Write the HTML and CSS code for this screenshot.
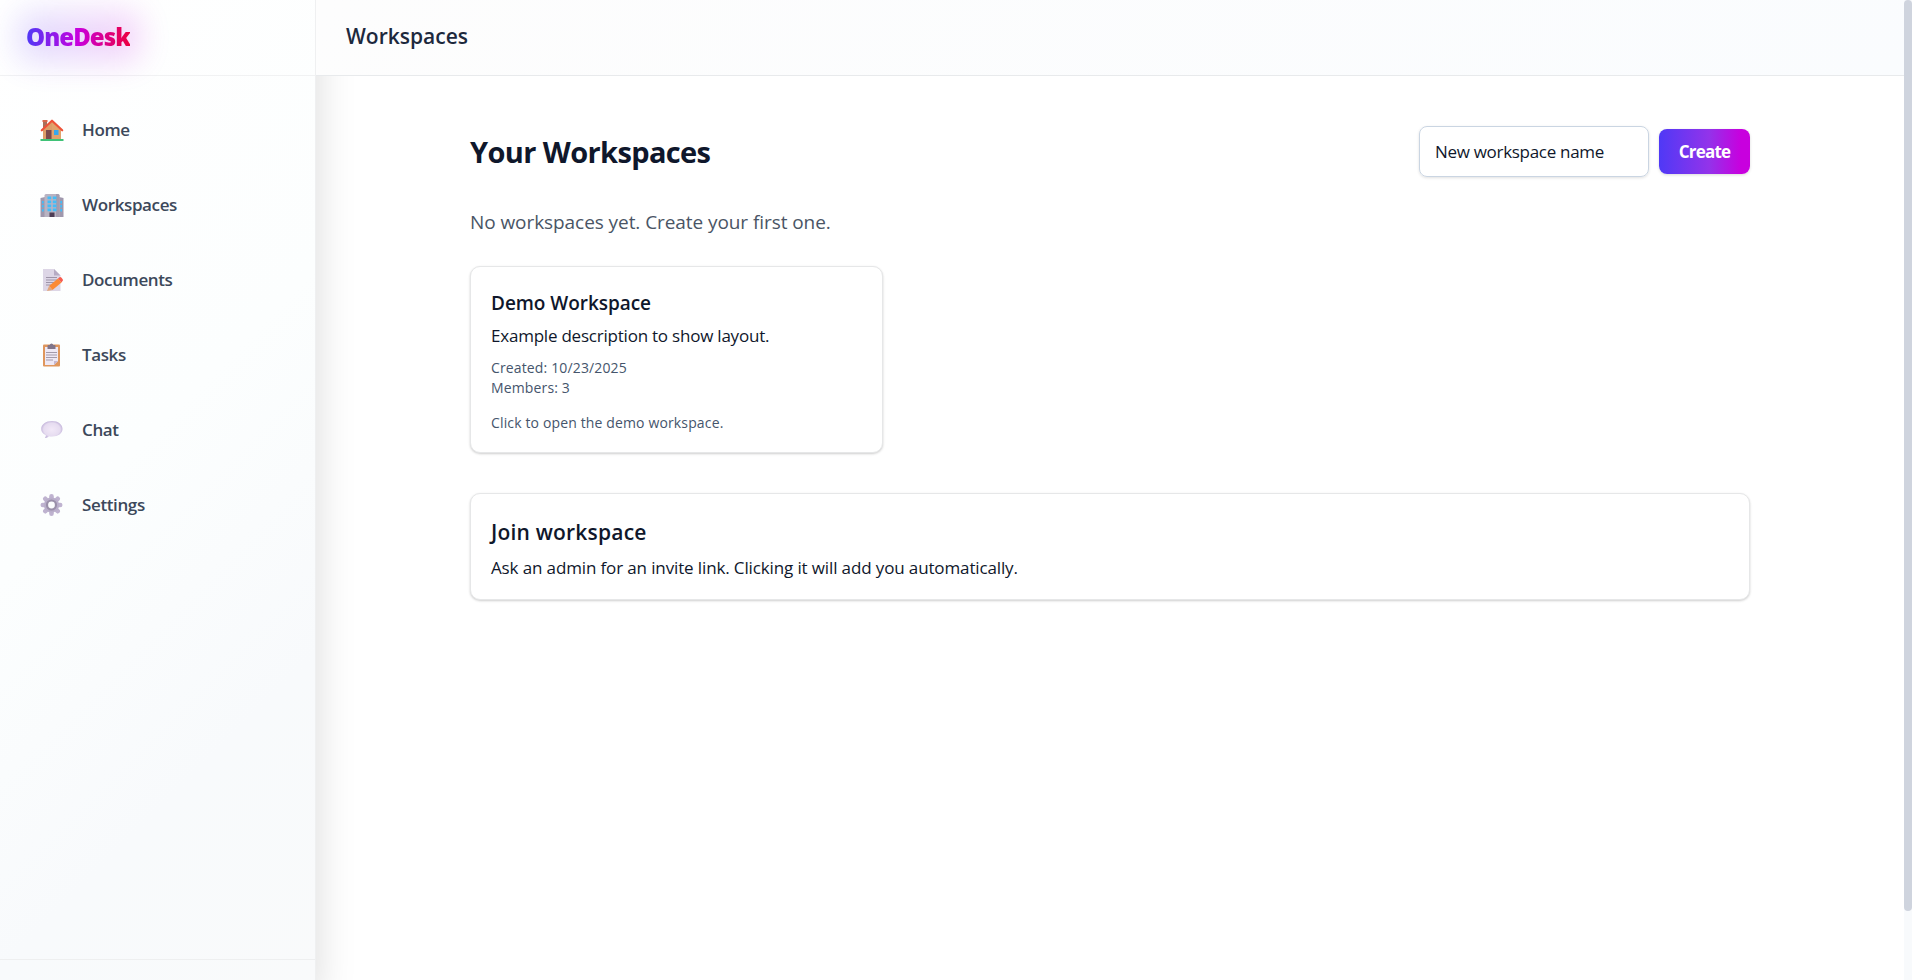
FILE: index.html
```html
<!DOCTYPE html>
<html lang="en">
<head>
<meta charset="utf-8">
<title>OneDesk</title>
<link rel="stylesheet" href="styles.css">
</head>
<body>
<div class="app">
  <aside class="sidebar">
    <div class="brand"><span class="brand-glow"></span><span class="brand-name">OneDesk</span></div>
    <nav class="nav">
      <a class="nav-item">
        <svg class="icon" viewBox="0 0 24 24"><path d="M3 3h4v7H3z" fill="#a9705a"/><path d="M2.500 2h5v2h-5z" fill="#d8664a"/><path d="M3 12l9-9 9 9v10H3z" fill="#e0a36c"/><path d="M3 12l9-9v19H3z" fill="#d99a66" opacity=".6"/><path d="M1.800 12.300L12 2.700l10.200 9.600" fill="none" stroke="#ee5238" stroke-width="2.200" stroke-linejoin="round" stroke-linecap="round"/><path d="M6 12h5.500v10H6z" fill="#7c4a4c"/><path d="M14 12h4.500v5H14z" fill="#35a8ee"/><path d="M.5 21h23v2H.5z" fill="#3fc277"/></svg>
        <span>Home</span></a>
      <a class="nav-item">
        <svg class="icon" viewBox="0 0 24 24"><path d="M.5 5L5 4v20H.5zM23.500 5L19 4v20h4.500z" fill="#9f98ad"/><path d="M4.500 2.500Q4.500 1 6 1h12q1.500 0 1.500 1.500V24h-15z" fill="#b9b3c2"/><path d="M16 1h2q1.500 0 1.500 1.500V24H16z" fill="#a49cae"/><path d="M7.500 3.500h3.700v2.700H7.500zm5.300 0h3.700v2.700h-3.700zM7.500 7.500h3.700v2.700H7.500zm5.300 0h3.700v2.700h-3.700zM7.500 11.500h3.700v2.700H7.500zm5.300 0h3.700v2.700h-3.700zM7.500 15.500h3.700v2.700H7.500zm5.300 0h3.700v2.700h-3.700zM2 8h1.700v2.500H2zm0 4h1.700v2.500H2zm0 4h1.700v2.500H2zM20.300 8H22v2.500h-1.700zm0 4H22v2.500h-1.700zm0 4H22v2.500h-1.700z" fill="#42bdf8"/><path d="M9.500 19.500h5V24h-5z" fill="#4d3d55"/></svg>
        <span>Workspaces</span></a>
      <a class="nav-item">
        <svg class="icon" viewBox="0 0 24 24"><path d="M3 1h11l6.500 6.500V23H3z" fill="#ddd6e6"/><path d="M14 1l6.500 6.500H14z" fill="#b6abc3"/><path d="M6 9.500h11M6 12h11M6 14.500h8M6 17h5" stroke="#9d94a8" fill="none"/><path d="M9 18L18 10.500l3.500 4L12.500 22z" fill="#fb8a35"/><path d="M9 18l3.500 4-5.500 1z" fill="#e3a77d"/><path d="M18 10.500l1.500-1.300q1-.6 1.800.3l1.400 1.700q.8 1-.2 1.900l-1 1.400z" fill="#f75c50"/></svg>
        <span>Documents</span></a>
      <a class="nav-item">
        <svg class="icon" viewBox="0 0 24 24"><rect x="3" y="1.500" width="17" height="22" rx="1" fill="#df965d"/><path d="M5 4h13v14l-4 4H5z" fill="#eee8f5"/><path d="M14 22v-4h4z" fill="#c5b7d1"/><path d="M7.500 3q0-1 1-1h1.200q.3-1.500 1.800-1.500T13.300 2h1.200q1 0 1 1v3h-8z" fill="#81758a"/><path d="M6 9.500h11M6 12h11M6 14.500h11M6 17h7" stroke="#a39aab" fill="none"/></svg>
        <span>Tasks</span></a>
      <a class="nav-item">
        <svg class="icon" viewBox="0 0 24 24"><defs><radialGradient id="bubble" cx=".5" cy=".5" r=".55"><stop offset="0" stop-color="#f2e9f8"/><stop offset=".7" stop-color="#e6dcf0"/><stop offset="1" stop-color="#b9a9d4"/></radialGradient></defs><path d="M12 3C18 3 22.500 6.500 22.500 11S18 18.500 12 18.500q-1.700 0-3-.2Q7.500 20 5 20q1-1.500.8-2.900Q1.200 15 1.200 11C1.200 6.500 6 3 12 3z" fill="url(#bubble)"/></svg>
        <span>Chat</span></a>
      <a class="nav-item">
        <svg class="icon" viewBox="0 0 24 24"><g stroke="#bfb3d0" stroke-width="4.600" stroke-linecap="round"><path d="M11.500 3.300v17.400M2.800 12h17.400M5.300 5.800l12.400 12.400M17.700 5.800L5.300 18.200"/></g><circle cx="11.500" cy="12" r="7.600" fill="#b9aeca"/><circle cx="11.500" cy="12" r="5.600" fill="#9a8fa9"/><circle cx="11.500" cy="12" r="3.400" fill="#fbfcfd"/></svg>
        <span>Settings</span></a>
    </nav>
    <div class="sidebar-footer"></div>
  </aside>
  <div class="page">
    <header class="topbar"><span class="topbar-title">Workspaces</span></header>
    <main class="content">
      <div class="heading-row">
        <h1 class="heading">Your Workspaces</h1>
        <div class="create-form">
          <div class="name-field">New workspace name</div>
          <button class="create-button">Create</button>
        </div>
      </div>
      <p class="empty-note">No workspaces yet. Create your first one.</p>
      <section class="card demo-card">
        <h2 class="demo-title">Demo Workspace</h2>
        <p class="body-text demo-text">Example description to show layout.</p>
        <p class="meta">Created: 10/23/2025<br>Members: 3</p>
        <p class="meta hint">Click to open the demo workspace.</p>
      </section>
      <section class="card join-card">
        <h2 class="join-title">Join workspace</h2>
        <p class="body-text join-text">Ask an admin for an invite link. Clicking it will add you automatically.</p>
      </section>
    </main>
  </div>
  <div class="scrollbar"><div class="scrollbar-thumb"></div></div>
</div>
</body>
</html>
```
FILE: styles.css
```css
* { box-sizing: border-box; margin: 0; padding: 0; }
body { font-family: "Open Sans", "Noto Sans", sans-serif; color: #0f172b; background: #fff; overflow: hidden; }
h1, h2, p, span { white-space: nowrap; }
.app { display: flex; height: 980px; }
.sidebar { width: 316px; flex: none; display: flex; flex-direction: column; border-right: 1px solid #eff0f1; background: linear-gradient(135deg, #fff 0%, #fcfefe 45%, #f8fafc 75%, #f9fafb 100%); box-shadow: 0 20px 38px rgba(0, 0, 0, .15); z-index: 1; }
.brand { height: 76px; flex: none; position: relative; padding: 20px 26px; border-bottom: 1px solid #f1f2f3; }
.brand-glow { position: absolute; left: 18px; top: 12px; width: 122px; height: 50px; border-radius: 12px; background: linear-gradient(90deg, #4f39f6, #c800de); opacity: .17; filter: blur(16px); }
.brand-name { position: relative; font-size: 24px; line-height: 34px; font-weight: 800; letter-spacing: -.95px; background: linear-gradient(90deg, #4f39f6, #c800de 50%, #ec003f); -webkit-background-clip: text; background-clip: text; color: transparent; }
.nav { flex: 1; display: flex; flex-direction: column; padding: 16px 16px; }
.nav-item { display: flex; align-items: center; gap: 18px; height: 75px; padding-left: 24px; font-size: 17px; font-weight: 600; letter-spacing: -.38px; color: #3c485a; }
.icon { width: 24px; height: 24px; }
.sidebar-footer { height: 21px; border-top: 1px solid #eeeff0; }
.page { flex: 1; }
.topbar { height: 76px; position: relative; z-index: 2; padding: 19px 30px; border-bottom: 1px solid #e8eaec; background: linear-gradient(135deg, #fdfdfd, #fafcfe); }
.topbar-title { font-size: 21px; line-height: 34px; font-weight: 600; color: #1d293d; }
.content { padding: 50px 154px 0; }
.heading-row { height: 51px; display: flex; align-items: center; justify-content: space-between; }
.heading { font-size: 29px; font-weight: 700; letter-spacing: -.62px; }
.create-form { display: flex; align-items: center; gap: 10px; }
.name-field { width: 230px; height: 51px; padding: 0 15px; line-height: 50px; border: 1px solid #cad5e2; border-radius: 8px; font-size: 17px; letter-spacing: -.3px; box-shadow: 0 1px 3px rgba(0, 0, 0, .12); }
.create-button { width: 91px; height: 45px; border: 0; border-radius: 8px; color: #fff; font: 700 17px "Open Sans", sans-serif; letter-spacing: -.8px; background: linear-gradient(90deg, #4f39f6, #9333ea 55%, #c800de 90%); box-shadow: 0 1px 3px rgba(0, 0, 0, .15); }
.empty-note { margin-top: 30px; font-size: 19px; line-height: 30px; letter-spacing: -.07px; color: #4a5565; }
.card { border: 1px solid #e6e7e8; border-radius: 10px; background: #fff; box-shadow: 0 1px 3px rgba(0, 0, 0, .1), 0 1px 2px rgba(0, 0, 0, .1); padding: 0 20px; }
.demo-card { width: 413px; height: 187px; margin-top: 29px; padding-top: 21px; }
.demo-title { font-size: 19px; line-height: 30px; font-weight: 600; letter-spacing: -.05px; }
.body-text { font-size: 17px; line-height: 28px; }
.demo-text { margin-top: 4px; letter-spacing: -.22px; }
.meta { margin-top: 8px; font-size: 14px; line-height: 20px; letter-spacing: .14px; color: #45556c; }
.hint { margin-top: 15px; }
.join-card { height: 107px; margin-top: 40px; padding-top: 22px; }
.join-title { font-size: 21px; line-height: 32px; font-weight: 600; letter-spacing: .2px; }
.join-text { margin-top: 6px; letter-spacing: -.13px; }
.scrollbar { width: 8px; background: #f8fafc; }
.scrollbar-thumb { height: 911px; border-radius: 4px; background: #cfd4de; }
```
